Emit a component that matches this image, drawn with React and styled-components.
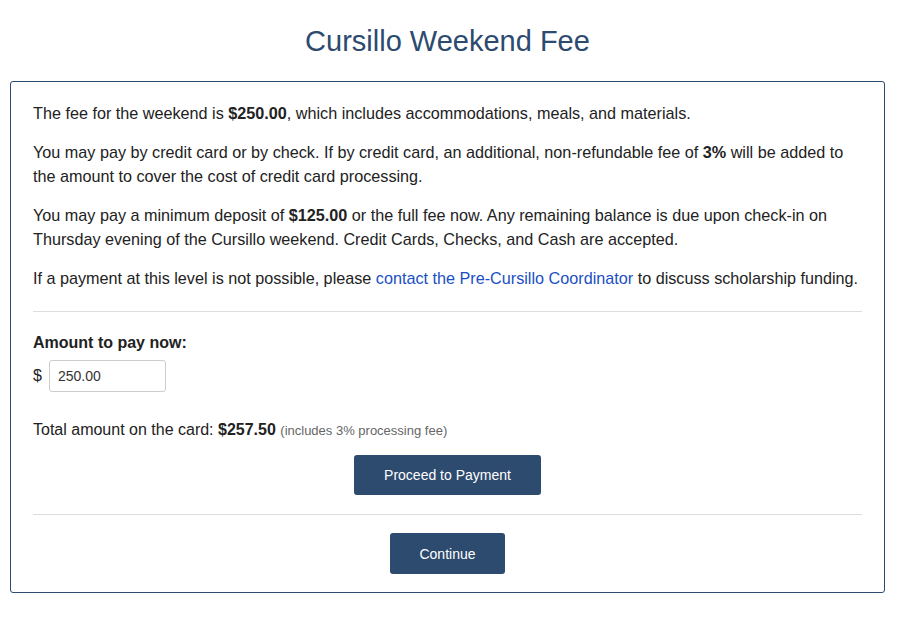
import React, { useState } from 'react';
import styled, { createGlobalStyle } from 'styled-components';

const GlobalStyle = createGlobalStyle`
  body {
    margin: 0;
    background: #fff;
    font-family: "Liberation Sans", Arial, sans-serif;
    color: #222;
  }
`;

const Page = styled.div`
  padding: 0 14px 30px 10px;
`;

const Title = styled.h1`
  margin: 24px 0 23px;
  font-size: 29px;
  font-weight: 400;
  line-height: 34px;
  text-align: center;
  color: #2d4a6f;
`;

const Card = styled.div`
  border: 1px solid #2d4a6f;
  border-radius: 3px;
  padding: 19px 22px 18px;
`;

const Para = styled.p`
  margin: 0 0 15px;
  font-size: 16.2px;
  line-height: 24px;
`;

const Link = styled.a`
  color: #1a4fc4;
  text-decoration: none;
`;

const Rule = styled.hr`
  border: 0;
  border-top: 1px solid #ddd;
  margin: ${({ $top }) => $top || 20}px 0 ${({ $bottom }) => $bottom || 20}px;
`;

const Label = styled.div`
  font-size: 16px;
  font-weight: 700;
  line-height: 24px;
  margin-bottom: 5px;
`;

const AmountRow = styled.div`
  display: flex;
  align-items: center;
  gap: 7px;
  font-size: 16px;
`;

const AmountInput = styled.input`
  width: 117px;
  height: 32px;
  box-sizing: border-box;
  border: 1px solid #ccc;
  border-radius: 3px;
  padding: 0 8px;
  font-family: "Liberation Sans", Arial, sans-serif;
  font-size: 14px;
  color: #333;
`;

const Total = styled.div`
  font-size: 16px;
  line-height: 24px;
  margin-top: 26px;
`;

const Note = styled.span`
  font-size: 13px;
  color: #666;
`;

const ButtonRow = styled.div`
  display: flex;
  justify-content: center;
  margin-top: ${({ $top }) => $top || 0}px;
`;

const Button = styled.button`
  background: #2d4a6f;
  color: #fff;
  border: 0;
  border-radius: 3px;
  height: ${({ $h }) => $h || 40}px;
  padding: 0 ${({ $pad }) => $pad || 29}px;
  font-family: "Liberation Sans", Arial, sans-serif;
  font-size: 14px;
  cursor: pointer;
`;

export default function App() {
  const [amount, setAmount] = useState('250.00');
  const total = (parseFloat(amount || 0) * 1.03).toFixed(2);

  return (
    <Page>
      <GlobalStyle />
      <Title>Cursillo Weekend Fee</Title>
      <Card>
        <Para>
          The fee for the weekend is <b>$250.00</b>, which includes accommodations, meals, and materials.
        </Para>
        <Para>
          You may pay by credit card or by check. If by credit card, an additional, non-refundable fee of <b>3%</b> will be added to the amount to cover the cost of credit card processing.
        </Para>
        <Para>
          You may pay a minimum deposit of <b>$125.00</b> or the full fee now. Any remaining balance is due upon check-in on Thursday evening of the Cursillo weekend. Credit Cards, Checks, and Cash are accepted.
        </Para>
        <Para>
          If a payment at this level is not possible, please <Link href="#">contact the Pre-Cursillo Coordinator</Link> to discuss scholarship funding.
        </Para>
        <Rule $top={21} $bottom={19} />
        <Label>Amount to pay now:</Label>
        <AmountRow>
          <span>$</span>
          <AmountInput value={amount} onChange={(e) => setAmount(e.target.value)} />
        </AmountRow>
        <Total>
          Total amount on the card: <b>${total}</b> <Note>(includes 3% processing fee)</Note>
        </Total>
        <ButtonRow $top={12}>
          <Button $pad={30}>Proceed to Payment</Button>
        </ButtonRow>
        <Rule $top={19} $bottom={18} />
        <ButtonRow>
          <Button $h={41} $pad={29}>Continue</Button>
        </ButtonRow>
      </Card>
    </Page>
  );
}
